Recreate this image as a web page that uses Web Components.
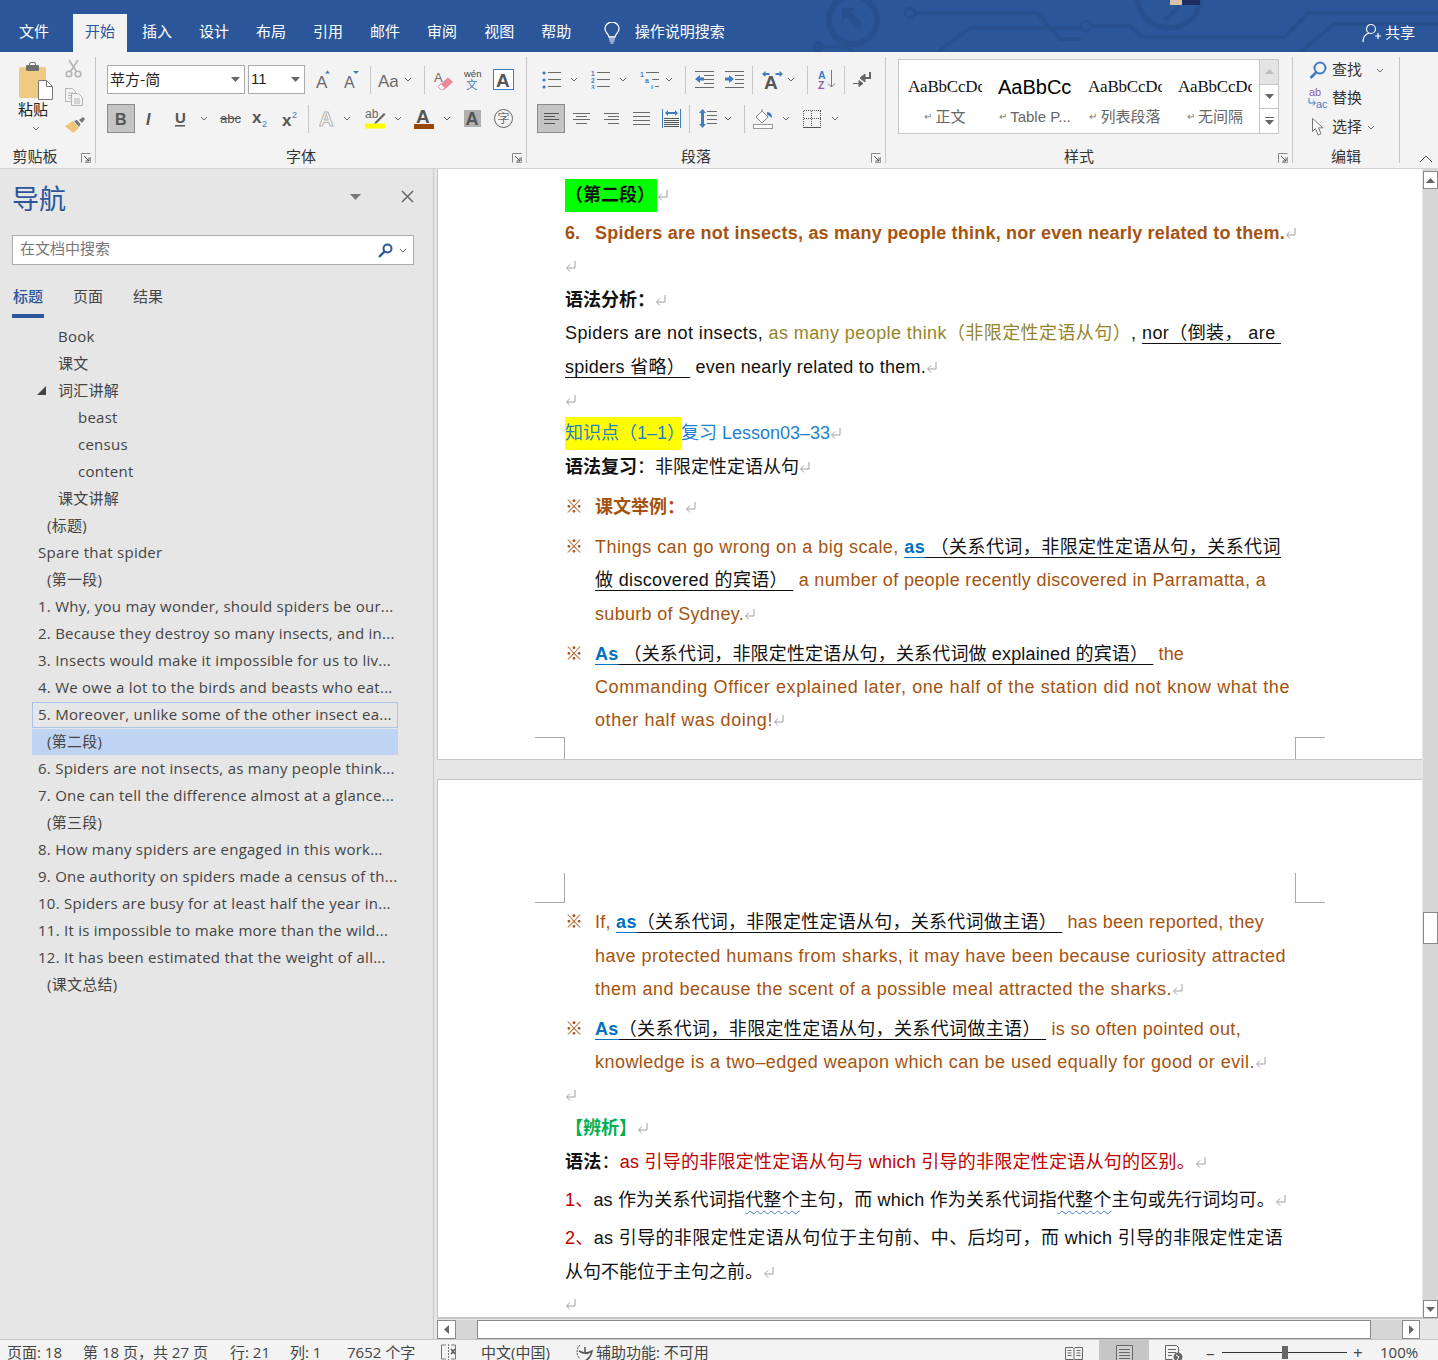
<!DOCTYPE html>
<html lang="zh-CN">
<head>
<meta charset="utf-8">
<title>Word</title>
<style>
html,body{margin:0;padding:0;height:1360px;overflow:hidden;background:#e6e6e6}
body{display:flex;flex-direction:column;font-family:"Noto Sans CJK SC",sans-serif}
</style>
</head>
<body>
<word-titlebar></word-titlebar>
<word-ribbon></word-ribbon>
<main-area>
  <nav-pane>
    <nav-item ind="58">Book</nav-item>
    <nav-item ind="58">课文</nav-item>
    <nav-item ind="58" open>词汇讲解</nav-item>
    <nav-item ind="78">beast</nav-item>
    <nav-item ind="78">census</nav-item>
    <nav-item ind="78">content</nav-item>
    <nav-item ind="58">课文讲解</nav-item>
    <nav-item ind="47">(标题)</nav-item>
    <nav-item ind="38">Spare that spider</nav-item>
    <nav-item ind="47">(第一段)</nav-item>
    <nav-item ind="38">1. Why, you may wonder, should spiders be our...</nav-item>
    <nav-item ind="38">2. Because they destroy so many insects, and in...</nav-item>
    <nav-item ind="38">3. Insects would make it impossible for us to liv...</nav-item>
    <nav-item ind="38">4. We owe a lot to the birds and beasts who eat...</nav-item>
    <nav-item ind="38" state="outline">5. Moreover, unlike some of the other insect ea...</nav-item>
    <nav-item ind="47" state="selected">(第二段)</nav-item>
    <nav-item ind="38">6. Spiders are not insects, as many people think...</nav-item>
    <nav-item ind="38">7. One can tell the difference almost at a glance...</nav-item>
    <nav-item ind="47">(第三段)</nav-item>
    <nav-item ind="38">8. How many spiders are engaged in this work...</nav-item>
    <nav-item ind="38">9. One authority on spiders made a census of th...</nav-item>
    <nav-item ind="38">10. Spiders are busy for at least half the year in...</nav-item>
    <nav-item ind="38">11. It is impossible to make more than the wild...</nav-item>
    <nav-item ind="38">12. It has been estimated that the weight of all...</nav-item>
    <nav-item ind="47">(课文总结)</nav-item>
  </nav-pane>
  <doc-view>
    <doc-page top="10" height="591" crop="bottom">
      <doc-line pm><w-r hl="green" b>（第二段）</w-r></doc-line>
      <doc-line sp="38" mark="6." mc="brown" mb fit="690" pm><w-r c="brown" b>Spiders are not insects, as many people think, nor even nearly related to them.</w-r></doc-line>
      <doc-line sp="32.5" pm></doc-line>
      <doc-line sp="34" pm><w-r b>语法分析：</w-r></doc-line>
      <doc-line fit="716">Spiders are not insects, <w-r c="olive">as many people think（非限定性定语从句）</w-r>, <w-r u>nor（倒装，&nbsp;are&nbsp;</w-r></doc-line>
      <doc-line sp="34" fit="361" pm><w-r u>spiders 省略）&nbsp;</w-r> even nearly related to them.</doc-line>
      <doc-line pm></doc-line>
      <doc-line sp="33.5" pm><w-r hl="yellow" c="link">知识点（1–1）</w-r><w-r c="link">复习 Lesson03–33</w-r></doc-line>
      <doc-line sp="33.5" pm><w-r b>语法复习</w-r>：非限定性定语从句</doc-line>
      <doc-line sp="40" mark="※" mc="brown" pm><w-r c="brown" b>课文举例：</w-r></doc-line>
      <doc-line sp="40" mark="※" mc="brown" fit="686"><w-r c="brown">Things can go wrong on a big scale, </w-r><w-r c="blue" b u>as</w-r><w-r u>&nbsp;（关系代词，非限定性定语从句，关系代词</w-r></doc-line>
      <doc-line ind fit="671"><w-r u>做 discovered 的宾语）&nbsp;</w-r><w-r c="brown"> a number of people recently discovered in Parramatta, a</w-r></doc-line>
      <doc-line sp="34" ind fit="149" pm><w-r c="brown">suburb of Sydney.</w-r></doc-line>
      <doc-line sp="40" mark="※" mc="brown" fit="589"><w-r c="blue" b u>As</w-r><w-r u>&nbsp;（关系代词，非限定性定语从句，关系代词做 explained 的宾语）&nbsp;</w-r><w-r c="brown"> the</w-r></doc-line>
      <doc-line ind fit="695"><w-r c="brown">Commanding Officer explained later, one half of the station did not know what the</w-r></doc-line>
      <doc-line ind fit="178" pm><w-r c="brown">other half was doing!</w-r></doc-line>
    </doc-page>
    <doc-page top="126" height="539" crop="top">
      <doc-line mark="※" mc="brown" fit="669"><w-r c="brown">If, </w-r><w-r c="blue" b u>as</w-r><w-r u>（关系代词，非限定性定语从句，关系代词做主语）&nbsp;</w-r><w-r c="brown"> has been reported, they</w-r></doc-line>
      <doc-line sp="34" ind fit="691"><w-r c="brown">have protected humans from sharks, it may have been because curiosity attracted</w-r></doc-line>
      <doc-line ind fit="577" pm><w-r c="brown">them and because the scent of a possible meal attracted the sharks.</w-r></doc-line>
      <doc-line sp="40" mark="※" mc="brown" fit="646"><w-r c="blue" b u>As</w-r><w-r u>（关系代词，非限定性定语从句，关系代词做主语）&nbsp;</w-r><w-r c="brown"> is so often pointed out,</w-r></doc-line>
      <doc-line ind fit="660" pm><w-r c="brown">knowledge is a two–edged weapon which can be used equally for good or evil.</w-r></doc-line>
      <doc-line pm></doc-line>
      <doc-line pm><w-r c="green" b>【辨析】</w-r></doc-line>
      <doc-line sp="34" fit="630" pm><w-r b>语法</w-r>：<w-r c="red">as 引导的非限定性定语从句与 which 引导的非限定性定语从句的区别。</w-r></doc-line>
      <doc-line sp="38" fit="710" pm><w-r c="red">1、</w-r>as 作为关系代词指<w-r sq>代整个</w-r>主句，而 which 作为关系代词指<w-r sq>代整个</w-r>主句或先行词均可。</doc-line>
      <doc-line sp="38" fit="718"><w-r c="red">2、</w-r>as 引导的非限定性定语从句位于主句前、中、后均可，而 which 引导的非限定性定语</doc-line>
      <doc-line sp="34" fit="198" pm>从句不能位于主句之前。</doc-line>
      <doc-line sp="32" pm></doc-line>
    </doc-page>
  </doc-view>
</main-area>
<status-bar></status-bar>

<script>
const GR = '#6a6a6a', BL = '#3f7cbf', LG = '#b4b4b4', SANS = 'Liberation Sans, sans-serif';
const svg = (w, h, body) => `<svg xmlns="http://www.w3.org/2000/svg" width="${w}" height="${h}" viewBox="0 0 ${w} ${h}">${body}</svg>`;
const txt = (x, y, size, fill, s, extra = '') => `<text x="${x}" y="${y}" font-size="${size}" fill="${fill}" font-family="${SANS}" ${extra}>${s}</text>`;
const cjk = (x, y, size, fill, s) => `<text x="${x}" y="${y}" font-size="${size}" fill="${fill}" font-family="Noto Sans CJK SC, sans-serif">${s}</text>`;
const lines = (list, color = GR) => list.map(([x1, y, x2]) => `<path d="M${x1} ${y}.5H${x2}" stroke="${color}"/>`).join('');

// icon set, every one hand drawn on its own pixel grid
const ICONS = {
    chev: svg(8, 5, `<path d="M1 1l3 3 3-3" fill="none" stroke="#666"/>`),
    sep: svg(1, 28, `<rect width="1" height="28" fill="#c6c6c6"/>`),
    launcher: svg(10, 10, `<path d="M.5 9.5V.5h9" fill="none" stroke="#888"/><path d="M3 3l5 5M8 4.5V8H4.5" fill="none" stroke="#555"/><path d="M9.5 4v5.5H4" fill="none" stroke="#999"/>`),
    paste: svg(36, 38, `<rect x="1" y="5" width="27" height="31" rx="2" fill="#efca82"/><rect x="8" y="3" width="13" height="6" rx="1" fill="#707070"/><rect x="11.5" y=".5" width="6" height="4" rx="1.5" fill="none" stroke="#707070"/><path d="M20.5 18.5h8l6 6v13h-14z" fill="#fff" stroke="#777"/><path d="M28.5 18.5v6h6" fill="none" stroke="#777"/>`),
    cut: svg(17, 19, `<g fill="none" stroke="${LG}" stroke-width="1.6"><circle cx="4" cy="15" r="2.8"/><circle cx="13" cy="15" r="2.8"/><path d="M5.5 12.5L13 1M11.5 12.5L4 1"/></g>`),
    copy: svg(18, 18, `<g fill="#f3f3f3" stroke="${LG}"><path d="M.5.5h7l3 3v10H.5z"/><path d="M6.5 5.5h7l4 4v8h-11z"/></g><path d="M3 5h5M3 7.5h3M3 10h3M9 11h6M9 13h6M9 15h6" stroke="${LG}"/>`),
    painter: svg(20, 16, `<path d="M0 9l8-5 6 7-6 5z" fill="#eec47c"/><path d="M9 4l3-1 3.5 4-1.500 3z" fill="#777"/><path d="M14 3l4-3 2 2-3 4z" fill="#777"/>`),
    grow: svg(18, 20, txt(1, 18, 17, GR, 'A') + `<path d="M10 3.500l2.500-3 2.500 3z" fill="${BL}"/>`),
    shrink: svg(18, 20, txt(1, 18, 16, GR, 'A') + `<path d="M10 1h6l-3 3z" fill="${BL}"/>`),
    case: svg(20, 18, txt(0, 16, 17, GR, 'Aa')),
    clear: svg(20, 20, txt(0, 12, 13, GR, 'A') + `<path d="M4 16.500l10-9 5 4.500-9 8z" fill="#e8879a"/><path d="M4 16.500l3-2.700 4 3.800-2 2.400H7z" fill="#fff" stroke="#e8879a"/>`),
    wen: svg(19, 21, txt(1, 7.500, 9.500, '#444', 'wén') + cjk(3, 20, 11.500, BL, '文')),
    boxA: svg(21, 21, `<rect x=".5" y=".5" width="20" height="20" fill="#fff" stroke="${BL}"/>` + txt(3, 18, 19, '#555', 'A', 'font-weight="700"')),
    B: svg(14, 18, txt(1, 15, 16, '#555', 'B', 'font-weight="700"')),
    I: svg(12, 18, txt(1, 15, 16, '#555', 'I', 'font-weight="700" font-style="italic"')),
    U: svg(14, 18, txt(1, 13, 15, '#555', 'U', 'font-weight="700"') + `<rect x="1" y="15" width="10" height="1.500" fill="#555"/>`),
    abc: svg(21, 16, txt(0, 12, 13, '#555', 'abc') + `<rect y="7" width="21" height="1" fill="#555"/>`),
    sub: svg(16, 16, txt(0, 12, 17, '#555', 'x', 'font-weight="700"') + txt(10, 16, 9, BL, '2')),
    sup: svg(16, 16, txt(0, 15, 17, '#555', 'x', 'font-weight="700"') + txt(10, 7, 9, BL, '2')),
    outlineA: svg(17, 19, txt(0, 17, 20, '#fff', 'A', `stroke="${LG}" stroke-width="1" font-weight="700"`)),
    highlight: svg(21, 20, txt(0, 9, 12, '#666', 'ab') + `<path d="M10 13l9-9 1.500 1.500-9 9-2.500 1z" fill="#666"/><rect y="14.500" width="20" height="5" fill="#ff0"/>`),
    color: svg(21, 20, txt(2, 14, 19, '#555', 'A', 'font-weight="700"') + `<rect y="15" width="20" height="5" fill="#984806"/>`),
    shadeA: svg(17, 17, `<rect width="17" height="17" fill="#b0b0b0"/>` + txt(1.500, 15, 18, '#555', 'A', 'font-weight="700"')),
    circleCh: svg(19, 19, `<circle cx="9.500" cy="9.500" r="9" fill="none" stroke="#666"/>` + cjk(3.500, 14, 12, '#666', '字')),
    bullets: svg(19, 18, `<g fill="${BL}"><circle cx="2" cy="2" r="1.600"/><circle cx="2" cy="9" r="1.600"/><circle cx="2" cy="16" r="1.600"/></g>` + lines([[6, 1, 19], [6, 8, 19], [6, 15, 19]])),
    numbers: svg(19, 18, txt(0, 5, 6.500, BL, '1', 'font-weight="700"') + txt(0, 12, 6.500, BL, '2', 'font-weight="700"') + txt(0, 18.500, 6.500, BL, '3', 'font-weight="700"') + lines([[6, 1, 19], [6, 8, 19], [6, 15, 19]])),
    multi: svg(19, 18, txt(0, 6, 7, BL, '1', 'font-weight="700"') + txt(5, 12, 7, BL, 'a', 'font-weight="700"') + txt(11, 18.500, 7, BL, 'i', 'font-weight="700"') + lines([[6, 1, 19], [12, 8, 19], [15, 15, 19]])),
    outdent: svg(19, 17, lines([[0, 0, 19], [9, 4, 19], [9, 8, 19], [9, 12, 19], [0, 16, 19]]) + `<path d="M0 8l5-4v2.500h4v3H5V12z" fill="${BL}"/>`),
    indent: svg(19, 17, lines([[0, 0, 19], [10, 4, 19], [10, 8, 19], [10, 12, 19], [0, 16, 19]]) + `<path d="M9 8L4 4v2.500H0v3h4V12z" fill="${BL}"/>`),
    dirA: svg(21, 18, `<path d="M0 3l3.500-3v2h4v2h-4v2zM21 3l-3.500-3v2h-4v2h4v2z" fill="${BL}"/>` + txt(2, 18, 19, '#555', 'A', 'font-weight="700"')),
    sort: svg(19, 19, txt(0, 8.500, 10.500, BL, 'A', 'font-weight="700"') + txt(0, 18.500, 10.500, '#8a5bb0', 'Z', 'font-weight="700"') + `<path d="M13.500 0v17M10 13.500l3.500 3.500 3.500-3.500" fill="none" stroke="#777"/>`),
    pilcrow: svg(18, 16, `<path d="M17 0v6h-7" fill="none" stroke="#666" stroke-width="2"/><path d="M12 2L7 6l5 4zM0 11.500h6M6 8.500l4 3-4 3z" fill="#666" stroke="#666"/>`),
    alignL: svg(15, 11, lines([[0, 0, 15], [0, 3, 11], [0, 6, 15], [0, 10, 11]], '#555')),
    alignC: svg(17, 11, lines([[0, 0, 17], [3, 3, 14], [0, 6, 17], [3, 10, 14]])),
    alignR: svg(15, 11, lines([[0, 0, 15], [4, 3, 15], [0, 6, 15], [4, 10, 15]])),
    alignJ: svg(17, 13, lines([[0, 0, 17], [0, 4, 17], [0, 8, 17], [0, 12, 17]])),
    dist: svg(19, 19, `<path d="M.5 0v19M18.500 0v19" stroke="${BL}"/><path d="M3 4l3-3v2h7V1l3 3-3 3V5H6v2z" fill="${BL}"/>` + lines([[2, 9, 17], [2, 11, 17], [2, 13, 17], [2, 15, 17], [2, 17, 17]], '#555')),
    spacing: svg(18, 19, `<path d="M3.500 0l3.500 4H5v11h2l-3.500 4L0 15h2V4H0z" fill="${BL}"/>` + lines([[8, 2, 18], [8, 6, 18], [8, 10, 18], [8, 14, 18]])),
    bucket: svg(20, 20, `<path d="M3 8l6-6 6 6-6 6z" fill="#fff" stroke="#888"/><path d="M9 2V0" stroke="#888"/><path d="M14 3c4 0 5 3 5 6-2-1-3-3-5-3z" fill="${BL}"/><rect x=".5" y="15.500" width="19" height="4" fill="#fff" stroke="#999"/>`),
    borders: svg(18, 18, `<path d="M.5.500h17M.5 8.500h17M8.500.500v17M.5.500v17M17.500.500v17" fill="none" stroke="#555" stroke-dasharray="1 1" shape-rendering="crispEdges"/><path d="M0 17.500h18" stroke="#555"/>`),
    find: svg(18, 18, `<circle cx="11" cy="7" r="5.500" fill="none" stroke="${BL}" stroke-width="2"/><path d="M7 11.500L1.500 17" stroke="${BL}" stroke-width="2.600"/>`),
    replace: svg(21, 21, txt(1, 8, 11, '#8a5bb0', 'ab') + txt(8, 20, 11, BL, 'ac') + `<path d="M1 10v5h6M5 12.500l2.500 2.500L5 17.500" fill="none" stroke="${BL}"/>`),
    cursor: svg(12, 18, `<path d="M.5.500v13l3-3 2.500 6.500 3-1.200-2.500-6h4.500z" fill="#fff" stroke="#777"/>`),
    caretUp: svg(14, 8, `<path d="M1 7l6-6 6 6" fill="none" stroke="#555"/>`),
    bulb: svg(16, 22, `<path d="M5 15c0-3-4-4-4-8a7 7 0 0 1 14 0c0 4-4 5-4 8z" fill="none" stroke="#fff" stroke-width="1.300"/><path d="M5 17h6M5.500 19h5M6.500 21h3" stroke="#fff"/>`),
    share: svg(20, 20, `<circle cx="9" cy="6" r="4.500" fill="none" stroke="#fff" stroke-width="1.200"/><path d="M1 19c0-5 3-8 6-9M13 13h6M16 10v6" fill="none" stroke="#fff" stroke-width="1.200"/>`),
    searchS: svg(15, 15, `<circle cx="9.500" cy="5.500" r="4" fill="none" stroke="#2b579a" stroke-width="2"/><path d="M6.500 8.500L1 14" stroke="#2b579a" stroke-width="2.400"/>`),
    closeX: svg(13, 13, `<path d="M1 1l11 11M12 1L1 12" stroke="#666" stroke-width="1.500"/>`),
    pm: svg(11, 12, `<path d="M10 1v7H2" fill="none" stroke="#a0a0a0"/><path d="M5 4.500L1.500 8 5 11.500" fill="none" stroke="#a0a0a0"/>`),
    book: svg(18, 17, `<path d="M.5 2.500h7.500l1 1 1-1h7.500v12H10l-1 1-1-1H.5z" fill="none" stroke="#666"/><path d="M9 3.500V17M2.500 5.500h4M2.500 8h4M2.500 10.500h4M11.500 5.500h4M11.500 8h4M11.500 10.500h4" stroke="#666"/>`),
    print: svg(17, 15, `<path d="M.5.500h16v17H.5z" fill="#d0d0d0" stroke="#666"/><path d="M3 4.500h11M3 7.500h11M3 10.500h11M3 13.500h11" stroke="#666"/>`),
    web: svg(18, 16, `<path d="M.5.500h11l2 2v6M.5.500v14h7" fill="none" stroke="#666"/><path d="M3 4.500h8M3 7.500h8M3 10.500h4" stroke="#666"/><circle cx="13" cy="12" r="4.500" fill="#666"/><path d="M11 10l3 2-2 3" stroke="#fff" fill="none"/>`),
    proofing: svg(18, 17, `<path d="M6 1H1.500v14H6M11 1h4.500v14H11" fill="none" stroke="#777"/><path d="M8.500 0v17" stroke="#777" stroke-dasharray="2 1"/><path d="M11 5l4 5M15 5l-4 5" stroke="#555" stroke-width="1.400"/>`),
    a11y: svg(21, 18, `<path d="M5 1C1 5 1 11 5 15" fill="none" stroke="#555" stroke-dasharray="2 1"/><path d="M4 7c5 3 8 3 13 0-1 5-3 8-7 10" fill="none" stroke="#555" stroke-width="1.500"/><path d="M10 3v5l3 2" fill="none" stroke="#555" stroke-width="1.500"/>`),
    triUp: svg(9, 5, `<path d="M0 5l4.500-5L9 5z" fill="#666"/>`),
    triDown: svg(9, 5, `<path d="M0 0l4.500 5L9 0z" fill="#666"/>`),
    triLeft: svg(5, 9, `<path d="M5 0L0 4.500 5 9z" fill="#666"/>`),
    triRight: svg(5, 9, `<path d="M0 0l5 4.500L0 9z" fill="#666"/>`),
    triMore: svg(9, 8, `<path d="M0 .5h9" stroke="#666"/><path d="M0 3l4.500 5L9 3z" fill="#666"/>`),
    triDownBig: svg(11, 6, `<path d="M0 0h11L5.500 6z" fill="#777"/>`),
};

class WIcon extends HTMLElement {
    connectedCallback() {
        if (this.shadowRoot) return;
        this.attachShadow({ mode: 'open' }).innerHTML = `<style>:host{display:inline-flex;line-height:0;flex:none}</style>${ICONS[this.getAttribute('name')] || ''}`;
    }
}
customElements.define('w-icon', WIcon);

// inline run of document text. no white space before the slot, it would render
class WRun extends HTMLElement {
    connectedCallback() {
        if (this.shadowRoot) return;
        this.attachShadow({ mode: 'open' }).innerHTML = `<style>
                :host([b]){font-weight:700}
                :host([c=brown]){color:#a5530f}
                :host([c=olive]){color:#94852a}
                :host([c=blue]){color:#0070c0}
                :host([c=link]){color:#1f80d0}
                :host([c=red]){color:#c00000}
                :host([c=green]){color:#00b050}
                :host([u]){text-decoration:underline;text-decoration-thickness:1px;text-underline-offset:4px}
                :host([sq]){text-decoration:underline wavy #4a7fd0;text-decoration-thickness:1px;text-underline-offset:4px}
                :host([hl]){display:inline-block;height:33px}
                :host([hl=green]){background:#0f0;width:92px}
                :host([hl=yellow]){background:#ff0;width:116px}
            </style><slot></slot>`;
    }
}
customElements.define('w-r', WRun);

class DocLine extends HTMLElement {
    connectedCallback() {
        if (this.shadowRoot) return;
        const mark = this.getAttribute('mark');
        const sp = this.getAttribute('sp');
        this.attachShadow({ mode: 'open' }).innerHTML = `<style>
                :host{display:block;height:33px;line-height:33px;white-space:nowrap;font-size:18px;color:#111;
                    font-family:"Liberation Sans","Noto Sans CJK SC",sans-serif;${sp ? `margin-top:${sp - 33}px;` : ''}}
                :host([ind]){padding-left:30px}
                .mark{display:inline-block;width:30px;color:#a5530f}
                :host([mb]) .mark{font-weight:700}
                w-icon{vertical-align:0}
            </style>${mark ? `<span class="mark">${mark}</span>` : ''}<span id="t"><slot></slot></span>${this.hasAttribute('pm') ? '<w-icon name="pm"></w-icon>' : ''}`;
        const fit = parseFloat(this.getAttribute('fit'));
        if (fit) {
            const t = this.shadowRoot.getElementById('t');
            const n = this.textContent.length;
            t.style.letterSpacing = ((fit - t.getBoundingClientRect().width) / n) + 'px';
        }
    }
}
customElements.define('doc-line', DocLine);

class CropMark extends HTMLElement {
    connectedCallback() {
        this.attachShadow({ mode: 'open' }).innerHTML = `
            <style>
                :host{position:absolute;width:29px;border:0 solid #a8a8a8;box-sizing:content-box}
                :host([at=bl]){left:97px;bottom:0;height:21px;border-top-width:1px;border-right-width:1px}
                :host([at=br]){left:857px;bottom:0;height:21px;border-top-width:1px;border-left-width:1px}
                :host([at=tl]){left:97px;top:93px;height:29px;border-bottom-width:1px;border-right-width:1px}
                :host([at=tr]){left:857px;top:93px;height:29px;border-bottom-width:1px;border-left-width:1px}
            </style>`;
    }
}
customElements.define('crop-mark', CropMark);

class DocPage extends HTMLElement {
    connectedCallback() {
        const crop = this.getAttribute('crop');
        this.attachShadow({ mode: 'open' }).innerHTML = `
            <style>
                :host{display:block;position:relative;box-sizing:border-box;background:#fff;overflow:hidden;
                    width:985px;padding-left:127px;border:0 solid #c6c6c6;border-width:0 0 1px 1px;
                    padding-top:${this.getAttribute('top')}px;height:${this.getAttribute('height')}px}
                :host([crop=top]){border-top-width:1px}
            </style>
            <crop-mark at="${crop === 'top' ? 'tl' : 'bl'}"></crop-mark>
            <crop-mark at="${crop === 'top' ? 'tr' : 'br'}"></crop-mark>
            <slot></slot>`;
    }
}
customElements.define('doc-page', DocPage);

class ScrollBtn extends HTMLElement {
    connectedCallback() {
        this.attachShadow({ mode: 'open' }).innerHTML = `
            <style>:host{display:flex;align-items:center;justify-content:center;flex:none;box-sizing:border-box;background:#fff;border:1px solid #8a8a8a;width:${this.getAttribute('w')}px;height:${this.getAttribute('h')}px}</style>
            <w-icon name="${this.getAttribute('icon')}"></w-icon>`;
    }
}
customElements.define('scroll-btn', ScrollBtn);

class DocView extends HTMLElement {
    connectedCallback() {
        this.attachShadow({ mode: 'open' }).innerHTML = `
            <style>
                :host{display:flex;flex-direction:column;flex:1;min-width:0;background:#e6e6e6}
                .top{display:flex;height:1149px}
                .pages{width:986px;display:flex;flex-direction:column;gap:19px;overflow:hidden}
                .vbar{width:15px;display:flex;flex-direction:column;background:#d6d6d6;padding-top:2px;box-sizing:border-box;height:1149px}
                .vtrack{flex:1;display:flex;flex-direction:column;padding-top:723px}
                .vthumb{height:32px;background:#fff;border:1px solid #8a8a8a;box-sizing:border-box}
                .hbar{height:22px;box-sizing:border-box;border-top:1px solid #c6c6c6;padding-top:1px;display:flex}
                .htrack{display:flex;background:#d6d6d6;width:946px;height:19px}
                .hthumb{width:894px;margin-left:21px;background:#fff;border:1px solid #8a8a8a;box-sizing:border-box}
            </style>
            <div class="top">
                <div class="pages"><slot></slot></div>
                <div class="vbar">
                    <scroll-btn w="15" h="18" icon="triUp"></scroll-btn>
                    <div class="vtrack"><div class="vthumb"></div></div>
                    <scroll-btn w="15" h="18" icon="triDown"></scroll-btn>
                </div>
            </div>
            <div class="hbar">
                <scroll-btn w="19" h="19" icon="triLeft"></scroll-btn>
                <div class="htrack"><div class="hthumb"></div></div>
                <scroll-btn w="18" h="19" icon="triRight"></scroll-btn>
            </div>`;
    }
}
customElements.define('doc-view', DocView);

class NavItem extends HTMLElement {
    connectedCallback() {
        const ind = +this.getAttribute('ind');
        this.attachShadow({ mode: 'open' }).innerHTML = `
            <style>
                :host{display:block;height:27px;line-height:27px;white-space:nowrap;position:relative;box-sizing:border-box;
                    font-size:15px;letter-spacing:.25px;color:#444;font-family:"Open Sans","Noto Sans CJK SC",sans-serif;padding-left:${ind}px}
                :host([state=outline])::before{content:"";position:absolute;left:32px;right:35px;top:1px;bottom:0;border:1px solid #a9c4ea}
                :host([state=selected])::before{content:"";position:absolute;left:32px;right:35px;top:1px;bottom:0;background:#bfd3f2}
                .t{position:relative}
                .arrow{position:absolute;left:37px;top:9px;width:0;height:0;border-style:solid;border-width:0 0 9px 9px;border-color:transparent transparent #444 transparent}
            </style>
            ${this.hasAttribute('open') ? '<span class="arrow"></span>' : ''}<span class="t"><slot></slot></span>`;
    }
}
customElements.define('nav-item', NavItem);

class NavPane extends HTMLElement {
    connectedCallback() {
        this.attachShadow({ mode: 'open' }).innerHTML = `
            <style>
                :host{display:block;width:437px;flex:none;box-sizing:border-box;background:#e6e6e6}
                .wrap{width:434px;height:100%;border-right:1px solid #c8c8c8;box-sizing:border-box;overflow:hidden}
                .head{display:flex;align-items:center;height:61px;padding:0 0 0 12px}
                h1{margin:-3px 0 0;font-size:27px;line-height:36px;font-weight:400;color:#2b579a;width:338px}
                .head w-icon:nth-of-type(1){margin-top:-6px}
                .head w-icon:nth-of-type(2){margin:-6px 0 0 40px}
                .search{margin:5px 0 0 12px;width:402px;height:30px;box-sizing:border-box;background:#fff;border:1px solid #ababab;display:flex;align-items:center;padding:0 6px 0 7px;font-size:15px;color:#777}
                .search span{flex:1;margin-top:-6px}
                .search w-icon:last-child{margin-left:6px}
                .tabs{display:flex;margin:20px 0 0 12px;font-size:15px;color:#444;height:33px}
                .tabs div{padding:0 1px;width:30px;line-height:21px;position:relative}
                .tabs div+div{margin-left:28px}
                .tabs .on{color:#2b579a;font-weight:500;border-bottom:4px solid #2b579a;height:29px}
                .tree{padding-top:5px}
            </style>
            <div class="wrap">
                <div class="head"><h1>导航</h1><w-icon name="triDownBig"></w-icon><w-icon name="closeX"></w-icon></div>
                <div class="search"><span>在文档中搜索</span><w-icon name="searchS"></w-icon><w-icon name="chev"></w-icon></div>
                <div class="tabs"><div class="on">标题</div><div>页面</div><div>结果</div></div>
                <div class="tree"><slot></slot></div>
            </div>`;
    }
}
customElements.define('nav-pane', NavPane);

class MainArea extends HTMLElement {
    connectedCallback() {
        this.attachShadow({ mode: 'open' }).innerHTML = `
            <style>:host{display:flex;height:1170px;flex:none}</style><slot></slot>`;
    }
}
customElements.define('main-area', MainArea);

class TitleBar extends HTMLElement {
    connectedCallback() {
        const tabs = ['插入', '设计', '布局', '引用', '邮件', '审阅', '视图', '帮助'];
        this.attachShadow({ mode: 'open' }).innerHTML = `
            <style>
                :host{display:block;height:52px;flex:none;background:#2b579a;position:relative;overflow:hidden;color:#fff;font-size:15px}
                .deco{position:absolute;left:0;top:0}
                .bar{position:relative;display:flex;height:52px;align-items:flex-end}
                .tab{height:38px;line-height:34px;padding:0 13.500px}
                .file{padding:0 24px 0 19px}
                .on{background:#f3f3f3;color:#2b579a;padding:0 12px;margin-right:1.500px}
                .tell{display:flex;align-items:center;height:38px;margin-left:19px}
                .tell span{margin-left:15px;line-height:34px;margin-top:-4px}
                .tell w-icon{margin-top:-1px}
                .share{position:absolute;left:1362px;top:14px;height:38px;display:flex;align-items:center}
                .share span{margin-left:3px;line-height:34px;margin-top:-2px}
                .avatar{position:absolute;left:1170px;top:0;width:30px;height:5px;background:linear-gradient(90deg,#dcc1aa 0 40%,#1e2c5e 40%)}
            </style>
            <svg class="deco" width="1438" height="52" fill="none" stroke="#28508f" stroke-width="4">
                <circle cx="853" cy="20" r="24" stroke-width="6"/>
                <path d="M842 8h13l-4 4 12 12-5 5-12-12-4 4z" fill="#28508f" stroke="none"/>
                <path d="M815 47h24c6 0 10 0 14 5" stroke-width="3"/><circle cx="818" cy="47" r="4" stroke-width="3"/>
                <circle cx="1169" cy="-4" r="32" stroke-width="5"/>
                <circle cx="910" cy="13" r="5" stroke-width="3"/>
                <path d="M915 13h122l24 26 h20"/>
                <path d="M938 52l32-24h111"/>
                <circle cx="1086" cy="26" r="5" stroke-width="3"/>
                <path d="M1092 26h38l12 11h142l24-24h130"/>
                <path d="M1300 52l34-28h104"/>
                <path d="M1165 20l14-14"/>
            </svg>
            <div class="avatar"></div>
            <div class="bar">
                <div class="tab file">文件</div>
                <div class="tab on">开始</div>
                ${tabs.map(t => `<div class="tab">${t}</div>`).join('')}
                <div class="tell"><w-icon name="bulb"></w-icon><span>操作说明搜索</span></div>
            </div>
            <div class="share"><w-icon name="share"></w-icon><span>共享</span></div>`;
    }
}
customElements.define('word-titlebar', TitleBar);

class RbTool extends HTMLElement {
    connectedCallback() {
        this.attachShadow({ mode: 'open' }).innerHTML = `
            <style>
                :host{display:flex;align-items:center;justify-content:center;flex:none;height:29px;box-sizing:border-box}
                :host([pressed]){background:#c4c4c4;border:1px solid #8a8a8a}
            </style>
            <w-icon name="${this.getAttribute('icon')}"></w-icon>`;
    }
}
customElements.define('rb-tool', RbTool);

class RbCombo extends HTMLElement {
    connectedCallback() {
        this.attachShadow({ mode: 'open' }).innerHTML = `
            <style>
                :host{display:flex;align-items:center;flex:none;height:29px;box-sizing:border-box;background:#fff;border:1px solid #ababab;padding:0 4px 0 2px;font-size:15px;color:#222;font-family:"Noto Sans CJK SC",sans-serif}
                span{flex:1;margin-top:-2px}
            </style>
            <span><slot></slot></span><w-icon name="triDown"></w-icon>`;
    }
}
customElements.define('rb-combo', RbCombo);

class RbGroup extends HTMLElement {
    connectedCallback() {
        const launch = this.hasAttribute('launcher');
        this.attachShadow({ mode: 'open' }).innerHTML = `
            <style>
                :host{display:flex;flex-direction:column;position:relative;height:106px;box-sizing:border-box;flex:none;border-right:1px solid #c6c6c6;width:${this.getAttribute('w')}px}
                .body{flex:1;min-height:0}
                .label{height:14px;line-height:14px;text-align:center;font-size:15px;color:#333;padding-right:${this.getAttribute('lp') || 0}px}
                w-icon{position:absolute;right:4px;bottom:0}
            </style>
            <div class="body"><slot></slot></div>
            <div class="label">${this.getAttribute('label')}</div>
            ${launch ? '<w-icon name="launcher"></w-icon>' : ''}`;
    }
}
customElements.define('rb-group', RbGroup);

class StyleCard extends HTMLElement {
    connectedCallback() {
        this.attachShadow({ mode: 'open' }).innerHTML = `
            <style>
                :host{display:block;flex:none;width:74px;margin-left:16px;color:#666}
                :host(:first-child){margin-left:9px}
                .s{height:38px;margin-top:8px;white-space:nowrap;overflow:hidden;color:#111;font:17px/38px "Liberation Serif",serif;letter-spacing:-.2px}
                :host([bold]) .s{font:20px/38px "Liberation Sans",sans-serif;color:#000;letter-spacing:0}
                .l{display:flex;justify-content:center;align-items:center;font-size:15px;line-height:20px;white-space:nowrap;margin-top:1px;font-family:"Liberation Sans","Noto Sans CJK SC",sans-serif}
                .l i{display:inline-block;font-style:normal;color:#777;font-size:10px;margin-right:3px}
            </style>
            <div class="s">${this.getAttribute('sample')}</div>
            <div class="l"><i>↵</i>${this.getAttribute('label')}</div>`;
    }
}
customElements.define('style-card', StyleCard);

// places a run of tools by the centre x of each one, relative to the group
const row = (items, start = 0) => {
    let x = start;
    return items.map(([name, cx, w, extra]) => {
        const left = cx - w / 2 - x;
        x = cx + w / 2;
        return `<rb-tool icon="${name}" ${extra || ''} style="margin-left:${left}px;width:${w}px"></rb-tool>`;
    }).join('');
};
const off = (x, list) => list.map(([n, c, w, e]) => [n, c - x, w || 14, e]);

class WordRibbon extends HTMLElement {
    connectedCallback() {
        const fontRow1 = row(off(96, [['grow', 324, 20], ['shrink', 352, 20], ['sep', 370, 2], ['case', 388, 20], ['chev', 408], ['sep', 424, 2], ['clear', 443.5, 20], ['wen', 472.5, 20], ['boxA', 503, 22]]), 209);
        const fontRow2 = row(off(96, [['B', 121, 28, 'pressed'], ['I', 151], ['U', 180.5], ['chev', 204], ['abc', 230, 22], ['sub', 260, 16], ['sup', 290, 16], ['sep', 308, 2], ['outlineA', 327, 18], ['chev', 347], ['highlight', 375, 22], ['chev', 398], ['color', 424, 22], ['chev', 447], ['shadeA', 472.5, 18], ['circleCh', 503, 20]]));
        const paraRow1 = row(off(527, [['bullets', 551, 20], ['chev', 574], ['numbers', 600, 20], ['chev', 623], ['multi', 649, 20], ['chev', 669], ['sep', 685, 2], ['outdent', 704, 20], ['indent', 734, 20], ['sep', 752, 2], ['dirA', 772, 22], ['chev', 791], ['sep', 807, 2], ['sort', 827, 20], ['sep', 844, 2], ['pilcrow', 862, 20]]));
        const paraRow2 = row(off(527, [['alignL', 551, 28, 'pressed'], ['alignC', 581, 18], ['alignR', 611, 16], ['alignJ', 641, 18], ['dist', 671, 20], ['sep', 689, 2], ['spacing', 707.5, 19], ['chev', 728], ['sep', 744, 2], ['bucket', 763, 20], ['chev', 786], ['borders', 811.5, 19], ['chev', 835]]));
        this.attachShadow({ mode: 'open' }).innerHTML = `
            <style>
                :host{display:flex;flex:none;box-sizing:border-box;padding-top:5px;background:#f3f3f3;border-bottom:1px solid #d2d2d2;height:117px;color:#333;position:relative;font-size:15px}
                .r{display:flex;height:29px}
                .r1{margin-top:8px}
                .r2{margin-top:10px}
                .clip{display:flex;padding:5px 0 0 18px}
                .paste{width:36px;display:flex;flex-direction:column;align-items:center;color:#222}
                .paste span{line-height:20px;margin:-1px 6px 0 0}
                .paste w-icon:last-child{margin-top:7px}
                .small{display:flex;flex-direction:column;margin:-3px 0 0 10px;width:22px;height:77px;justify-content:space-between}
                .small w-icon{display:flex;height:19px;margin-left:1px}
                .box{display:flex;margin:2px 0 0 12px;width:381px;height:75px;background:#fff;border:1px solid #c6c6c6;box-sizing:border-box}
                .cards{display:flex;width:362px;overflow:hidden}
                .more{width:18px;display:flex;flex-direction:column;border-left:1px solid #c6c6c6}
                .more div{flex:1;display:flex;align-items:center;justify-content:center;border-bottom:1px solid #c6c6c6}
                .more div:first-child{background:#e4e4e4}
                .more div:first-child w-icon{opacity:.3}
                .more div:last-child{border:0}
                .edit{margin-top:-1px;color:#333}
                .edit div{display:flex;align-items:center;height:28.500px}
                .edit .i{width:39px;display:flex;justify-content:center;padding-left:11px;box-sizing:border-box;margin:0}
                .edit span{margin:-3px 0 0;line-height:20px}
                .edit w-icon{margin-top:0}
                .collapse{position:absolute;left:1419px;top:103px}
            </style>
            <rb-group w="96" label="剪贴板" lp="25" launcher>
                <div class="clip">
                    <div class="paste"><w-icon name="paste"></w-icon><span>粘贴</span><w-icon name="chev"></w-icon></div>
                    <div class="small"><w-icon name="cut"></w-icon><w-icon name="copy"></w-icon><w-icon name="painter"></w-icon></div>
                </div>
            </rb-group>
            <rb-group w="431" label="字体" lp="20" launcher>
                <div class="r r1"><rb-combo style="margin-left:11px;width:138px">苹方-简</rb-combo><rb-combo style="margin-left:3px;width:57px;font-family:'Liberation Sans'">11</rb-combo>${fontRow1}</div>
                <div class="r r2">${fontRow2}</div>
            </rb-group>
            <rb-group w="359" label="段落" lp="20" launcher>
                <div class="r r1">${paraRow1}</div>
                <div class="r r2">${paraRow2}</div>
            </rb-group>
            <rb-group w="407" label="样式" lp="20" launcher>
                <div class="box">
                    <div class="cards">
                        <style-card sample="AaBbCcDc" label="正文"></style-card>
                        <style-card sample="AaBbCc" label="Table P..." bold></style-card>
                        <style-card sample="AaBbCcDc" label="列表段落"></style-card>
                        <style-card sample="AaBbCcDc" label="无间隔"></style-card>
                    </div>
                    <div class="more"><div><w-icon name="triUp"></w-icon></div><div><w-icon name="triDown"></w-icon></div><div><w-icon name="triMore"></w-icon></div></div>
                </div>
            </rb-group>
            <rb-group w="107" label="编辑">
                <div class="edit">
                    <div><span class="i"><w-icon name="find"></w-icon></span><span>查找</span><w-icon name="chev" style="margin-left:14px"></w-icon></div>
                    <div><span class="i"><w-icon name="replace"></w-icon></span><span>替换</span></div>
                    <div><span class="i"><w-icon name="cursor"></w-icon></span><span>选择</span><w-icon name="chev" style="margin-left:5px"></w-icon></div>
                </div>
            </rb-group>
            <w-icon class="collapse" name="caretUp"></w-icon>`;
    }
}
customElements.define('word-ribbon', WordRibbon);

class StatusBar extends HTMLElement {
    connectedCallback() {
        const cell = (w, s) => `<div style="width:${w}px">${s}</div>`;
        this.attachShadow({ mode: 'open' }).innerHTML = `
            <style>
                :host{display:flex;flex:none;height:21px;box-sizing:border-box;background:#f3f3f3;border-top:1px solid #c6c6c6;padding:5px 0 0 7px;font-size:15px;line-height:15px;color:#444;font-family:"Open Sans","Noto Sans CJK SC",sans-serif;white-space:nowrap}
                .ic{box-sizing:border-box;display:flex;margin-top:-1px}
                .views{display:flex;margin:-5px 0 0 auto;height:20px}
                .view{display:flex;justify-content:center;padding-top:5px;width:50px;box-sizing:border-box;overflow:hidden}
                .view.on{background:#c6c6c6}
                .zoom{display:flex;align-items:center;height:15px;margin:0 0 0 7px;width:174px;box-sizing:border-box}
                .zoom b{font-weight:400;font-size:17px;line-height:15px;width:16px}
                .zoom .track{width:125px;height:1px;background:#333;position:relative;margin:0 6px 0 0}
                .zoom .track::after{content:"";position:absolute;left:60px;top:-6px;width:6px;height:13px;background:#666}
                .pc{width:58px;box-sizing:border-box}
            </style>
            ${cell(76, '页面: 18')}${cell(147, '第 18 页，共 27 页')}${cell(60, '行: 21')}${cell(57, '列: 1')}${cell(93, '7652 个字')}
            <div class="ic" style="width:41px"><w-icon name="proofing"></w-icon></div>
            ${cell(94, '中文(中国)')}
            <div class="ic" style="width:21px"><w-icon name="a11y"></w-icon></div>
            ${cell(113, '辅助功能: 不可用')}
            <div class="views">
                <div class="view"><w-icon name="book"></w-icon></div>
                <div class="view on"><w-icon name="print"></w-icon></div>
                <div class="view"><w-icon name="web"></w-icon></div>
            </div>
            <div class="zoom"><b>–</b><div class="track"></div><b>+</b></div>
            <div class="pc">100%</div>`;
    }
}
customElements.define('status-bar', StatusBar);
</script>
</body>
</html>
